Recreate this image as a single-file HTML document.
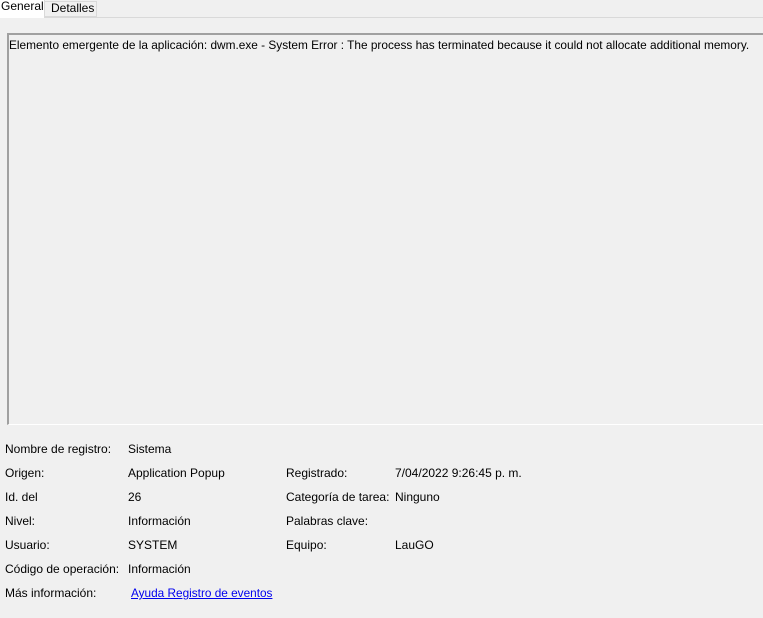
<!DOCTYPE html>
<html><head><style>
html,body{margin:0;padding:0;width:763px;height:618px;background:#f0f0f0;overflow:hidden;font-family:"Liberation Sans",sans-serif;font-size:12px;color:#000;position:relative}
.tabs{position:absolute;left:0;top:0;width:763px;height:17px;border-bottom:1px solid #d9d9d9;background:#f0f0f0}
.t1{position:absolute;left:0;top:0;width:45px;height:18px;background:#fff;border-right:1px solid #d9d9d9;line-height:13px;padding-left:1px;box-sizing:border-box}
.t2{position:absolute;left:45px;top:1px;width:52px;height:16px;border:1px solid #d9d9d9;border-left:none;line-height:13px;padding-left:6px;box-sizing:border-box}
.box{position:absolute;left:7px;top:33px;width:760px;height:392px;box-sizing:border-box;border-top:2px solid #a0a0a0;border-left:2px solid #a0a0a0;border-bottom:1px solid #fff}
.msg{position:absolute;left:9px;top:38px;white-space:nowrap;font-size:11.85px}
.l{position:absolute;white-space:nowrap}
a{color:#0000ee;text-decoration:underline;font-size:11.8px}
</style></head><body>
<div class="tabs"><div class="t1">General</div><div class="t2">Detalles</div></div>
<div class="box"></div>
<div class="msg">Elemento emergente de la aplicación: dwm.exe - System Error : The process has terminated because it could not allocate additional memory.</div>
<div class="l" style="left:5px;top:442px">Nombre de registro:</div><div class="l" style="left:128px;top:442px">Sistema</div>
<div class="l" style="left:5px;top:466px">Origen:</div><div class="l" style="left:128px;top:466px">Application Popup</div><div class="l" style="left:286px;top:466px">Registrado:</div><div class="l" style="left:395px;top:466px">7/04/2022 9:26:45 p. m.</div>
<div class="l" style="left:5px;top:490px">Id. del</div><div class="l" style="left:128px;top:490px">26</div><div class="l" style="left:286px;top:490px">Categoría de tarea:</div><div class="l" style="left:395px;top:490px">Ninguno</div>
<div class="l" style="left:5px;top:514px">Nivel:</div><div class="l" style="left:128px;top:514px">Información</div><div class="l" style="left:286px;top:514px">Palabras clave:</div>
<div class="l" style="left:5px;top:538px">Usuario:</div><div class="l" style="left:128px;top:538px">SYSTEM</div><div class="l" style="left:286px;top:538px">Equipo:</div><div class="l" style="left:395px;top:538px">LauGO</div>
<div class="l" style="left:5px;top:562px">Código de operación:</div><div class="l" style="left:128px;top:562px">Información</div>
<div class="l" style="left:5px;top:586px">Más información:</div><div class="l" style="left:131px;top:586px"><a>Ayuda Registro de eventos</a></div>
</body></html>
